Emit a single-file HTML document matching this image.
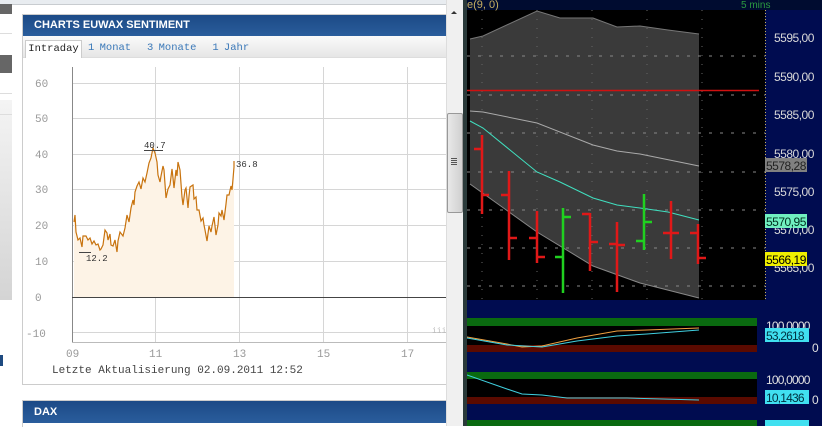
<!DOCTYPE html>
<html><head><meta charset="utf-8"><style>
body{margin:0;width:822px;height:426px;overflow:hidden;background:#fff;font-family:"Liberation Sans",sans-serif;position:relative}
.a{position:absolute}
.mono{font-family:"Liberation Mono",monospace}
</style></head><body>
<div class="a" style="left:0;top:0;width:446px;height:4px;background:#e8ecf0;border-bottom:1px solid #c8ccd0"></div>
<div class="a" style="left:0;top:4px;width:12px;height:10px;background:#666"></div>
<div class="a" style="left:0;top:55px;width:12px;height:18px;background:#666"></div>
<div class="a" style="left:0;top:100px;width:12px;height:200px;background:linear-gradient(#f4f4f4,#d4d4d4)"></div>
<div class="a" style="left:0;top:33px;width:12px;height:1px;background:#ddd"></div>
<div class="a" style="left:0;top:93px;width:12px;height:1px;background:#ddd"></div>
<div class="a" style="left:0;top:114px;width:12px;height:1px;background:#ddd"></div>
<div class="a" style="left:0;top:355px;width:3px;height:11px;background:#1e4a80"></div>

<div class="a" style="left:22px;top:14px;width:424px;height:369px;border:1px solid #ccc;border-right:none;background:#fff"></div>
<div class="a" style="left:23px;top:15px;width:423px;height:21px;background:linear-gradient(#1c4a86,#2a5d9c);color:#fff;font-weight:bold;font-size:11px;line-height:21px;padding-left:11px;box-sizing:border-box">CHARTS EUWAX SENTIMENT</div>
<div class="a" style="left:23px;top:36px;width:423px;height:21px;background:linear-gradient(#fafafa,#e6e6e6);border-bottom:1px solid #ddd"></div>
<div class="a mono" style="left:25px;top:40px;width:55px;height:17px;background:#fff;border:1px solid #ccc;border-bottom:none;font-size:10.5px;line-height:17px;text-align:center;color:#222">Intraday</div>
<div class="a mono" style="left:88px;top:42px;font-size:10.5px;color:#3a78b8;word-spacing:-1px">1 Monat&nbsp;&nbsp; 3 Monate&nbsp;&nbsp; 1 Jahr</div>

<svg class="a" style="left:0;top:0" width="446" height="426">
<g stroke="#d6d6d6" stroke-width="1">
<line x1="72" y1="83.5" x2="446" y2="83.5"/><line x1="72" y1="118.5" x2="446" y2="118.5"/><line x1="72" y1="154.5" x2="446" y2="154.5"/><line x1="72" y1="189.5" x2="446" y2="189.5"/><line x1="72" y1="225.5" x2="446" y2="225.5"/><line x1="72" y1="261.5" x2="446" y2="261.5"/><line x1="72" y1="332.5" x2="446" y2="332.5"/>
<line x1="155.5" y1="67" x2="155.5" y2="342"/><line x1="239.5" y1="67" x2="239.5" y2="342"/><line x1="323.5" y1="67" x2="323.5" y2="342"/><line x1="407.5" y1="67" x2="407.5" y2="342"/>
</g>
<line x1="72" y1="342.5" x2="446" y2="342.5" stroke="#bbb"/>
<line x1="72.5" y1="67" x2="72.5" y2="342" stroke="#888"/>
<path d="M74,297 L74,222 75,215 76,232 78,240 80,238 82,247 83,236 86,236 88,240 90,238 92,244 94,241 96,245 98,244 100,250 101,249 103,245 105,230 107,233 108,240 110,234 111,245 113,246 115,240 117,252 118,241 120,232 123,236 125,228 127,215 129,222 131,208 133,200 134,205 135,192 137,186 139,182 141,189 143,178 145,182 147,173 149,163 151,158 153,148 155,153 157,162 158,175 160,182 161,176 163,166 164,170 166,198 168,189 170,185 172,169 173,178 174,188 176,170 177,176 178,162 180,170 182,197 183,205 185,190 186,188 188,208 189,196 190,187 193,185 194,199 196,197 197,210 199,210 201,221 203,218 204,225 205,230 207,241 209,226 211,232 212,226 214,217 216,235 218,225 219,213 221,216 222,210 224,220 226,204 227,195 229,195 231,186 232,190 233,179 234,172 234,297 Z" fill="#fdf3e6" stroke="none"/>
<path d="M74,222 75,215 76,232 78,240 80,238 82,247 83,236 86,236 88,240 90,238 92,244 94,241 96,245 98,244 100,250 101,249 103,245 105,230 107,233 108,240 110,234 111,245 113,246 115,240 117,252 118,241 120,232 123,236 125,228 127,215 129,222 131,208 133,200 134,205 135,192 137,186 139,182 141,189 143,178 145,182 147,173 149,163 151,158 153,148 155,153 157,162 158,175 160,182 161,176 163,166 164,170 166,198 168,189 170,185 172,169 173,178 174,188 176,170 177,176 178,162 180,170 182,197 183,205 185,190 186,188 188,208 189,196 190,187 193,185 194,199 196,197 197,210 199,210 201,221 203,218 204,225 205,230 207,241 209,226 211,232 212,226 214,217 216,235 218,225 219,213 221,216 222,210 224,220 226,204 227,195 229,195 231,186 232,190 233,179 234,167 234,161" fill="none" stroke="#c8730e" stroke-width="1.2"/>
<line x1="72" y1="297.5" x2="446" y2="297.5" stroke="#444"/>
<line x1="144" y1="150.5" x2="163" y2="150.5" stroke="#444"/>
<line x1="79" y1="252.5" x2="91" y2="252.5" stroke="#444"/>
<g font-family="Liberation Mono,monospace" font-size="9" fill="#333">
<text x="144" y="148">40.7</text><text x="236" y="167">36.8</text><text x="86" y="261">12.2</text></g>
<g font-family="Liberation Mono,monospace" font-size="11" fill="#999">
<text x="35" y="87">60</text><text x="35" y="122">50</text><text x="35" y="158">40</text><text x="35" y="193">30</text><text x="35" y="229">20</text><text x="35" y="265">10</text><text x="35" y="301">0</text><text x="26" y="337">-10</text>
<text x="66" y="357">09</text><text x="149" y="357">11</text><text x="233" y="357">13</text><text x="317" y="357">15</text><text x="401" y="357">17</text></g>
<text x="52" y="373" font-family="Liberation Mono,monospace" font-size="11" fill="#444">Letzte Aktualisierung 02.09.2011 12:52</text>
<text x="432" y="333" font-family="Liberation Mono,monospace" font-size="8" fill="#bbb">iii</text>
</svg>
<div class="a" style="left:22px;top:400px;width:424px;height:26px;border:1px solid #ccc;border-right:none;border-bottom:none"></div>
<div class="a" style="left:23px;top:401px;width:423px;height:22px;background:linear-gradient(#1c4a86,#2a5d9c);color:#fff;font-weight:bold;font-size:11px;line-height:22px;padding-left:11px;box-sizing:border-box">DAX</div>

<div class="a" style="left:446px;top:0;width:17px;height:426px;background:#f0f0f0;border-left:1px solid #ddd"></div>
<div class="a" style="left:451px;top:11px;width:0;height:0;border-left:3px solid transparent;border-right:3px solid transparent;border-bottom:3px solid #333"></div>
<div class="a" style="left:447px;top:113px;width:14px;height:98px;background:linear-gradient(90deg,#e8e8e8,#d0d0d0);border:1px solid #999;border-radius:2px"></div>
<div class="a" style="left:451px;top:158px;width:6px;height:8px;background:repeating-linear-gradient(#555 0 1px,transparent 1px 2px)"></div>
<div class="a" style="left:463px;top:0;width:4px;height:426px;background:#2a3a3a"></div>

<svg class="a" style="left:467px;top:0" width="355" height="426">
<rect width="355" height="426" fill="#000"/>
<rect width="355" height="10" fill="#000c30"/>
<text x="0" y="8" font-size="11" fill="#c8b060" font-family="Liberation Sans">e(9, 0)</text>
<text x="274" y="8" font-size="10" fill="#2a9a40" font-family="Liberation Sans">5 mins</text>
<rect x="298" y="10" width="57" height="290" fill="#000c50"/>
<line x1="298.5" y1="10" x2="298.5" y2="300" stroke="#c8b060" stroke-dasharray="1,2"/>
<path d="M3,39 16,36 70,11 93,18 126,18 150,27 173,26 201,30 232,34 232,298 173,283 126,266 70,232 3,184Z" fill="#3a3a3a"/>
<path d="M3,39 16,36 70,11 93,18 126,18 150,27 173,26 201,30 232,34" fill="none" stroke="#777"/>
<path d="M3,184 70,232 126,266 173,283 232,298" fill="none" stroke="#888"/>
<g stroke="#888" stroke-dasharray="3,8" stroke-width="1">
<line x1="0" y1="56" x2="298" y2="56"/><line x1="0" y1="95" x2="298" y2="95"/><line x1="0" y1="133" x2="298" y2="133"/><line x1="0" y1="172" x2="298" y2="172"/><line x1="0" y1="210" x2="298" y2="210"/><line x1="0" y1="248" x2="298" y2="248"/><line x1="0" y1="286" x2="298" y2="286"/>
</g>
<g stroke="#666" stroke-dasharray="1,8"><line x1="15" y1="10" x2="15" y2="300"/><line x1="70" y1="10" x2="70" y2="300"/><line x1="125" y1="10" x2="125" y2="300"/><line x1="180" y1="10" x2="180" y2="300"/><line x1="235" y1="10" x2="235" y2="300"/></g>
<line x1="0" y1="90.5" x2="292" y2="90.5" stroke="#d01010" stroke-width="1.5"/>
<path d="M3,111 16,112 70,123 126,145 150,151 173,154 232,166" fill="none" stroke="#aaa"/>
<path d="M3,121 16,128 70,172 93,182 126,198 150,205 173,208 201,212 232,220" fill="none" stroke="#40e0c0"/>
<g stroke-width="2.5" fill="none">
<path stroke="#e01818" d="M15,135V214M7,149H15M15,195H22 M42,171V260M34,195H42M42,238H50 M70,211V263M62,238H70M70,257H78 M123,213V271M115,214H123M123,242H131 M150,222V292M142,244H150M150,245H158 M204,201V259M196,233H204M204,233H212 M231,224V264M223,233H231M231,258H239"/>
<path stroke="#20d020" d="M96,208V293M88,257H96M96,217H104 M177,194V250M169,241H177M177,222H185"/>
</g>
<g font-family="Liberation Sans" font-size="12" fill="#d8d8d8" letter-spacing="-0.5">
<text x="307" y="42">5595,00</text><text x="307" y="81">5590,00</text><text x="307" y="119">5585,00</text><text x="307" y="158">5580,00</text><text x="307" y="196">5575,00</text><text x="307" y="234">5570,00</text><text x="307" y="272">5565,00</text></g>
<rect x="298" y="158" width="42" height="14" fill="#808080"/><text x="299" y="170" font-size="12" fill="#222" letter-spacing="-0.5" font-family="Liberation Sans">5578,28</text>
<rect x="298" y="214" width="42" height="14" fill="#70f0c0"/><text x="299" y="226" font-size="12" fill="#003020" letter-spacing="-0.5" font-family="Liberation Sans">5570,95</text>
<rect x="298" y="252" width="42" height="14" fill="#f0f000"/><text x="299" y="264" font-size="12" fill="#000" letter-spacing="-0.5" font-family="Liberation Sans">5566,19</text>
<rect x="0" y="300" width="355" height="126" fill="#000c50"/>
<rect x="0" y="318" width="290" height="8" fill="#0a6a10"/><rect x="0" y="326" width="290" height="19" fill="#000"/><rect x="0" y="345" width="290" height="7" fill="#5a0a00"/>
<path d="M0,337 40,344 55,347 75,346 110,338 150,331 180,330 232,328" fill="none" stroke="#f0a040"/>
<path d="M0,338 40,345 75,347 110,341 150,336 180,334 232,330" fill="none" stroke="#40d0e0"/>
<rect x="0" y="372" width="290" height="7" fill="#0a6a10"/><rect x="0" y="379" width="290" height="18" fill="#000"/><rect x="0" y="397" width="290" height="7" fill="#5a0a00"/>
<path d="M0,375 40,389 55,394 75,395 100,398 160,398 232,400" fill="none" stroke="#40d0e0"/>
<rect x="0" y="420" width="290" height="6" fill="#0a6a10"/>
<g font-family="Liberation Sans" font-size="12" fill="#e0e0e0" letter-spacing="-0.8"><text x="299" y="330">100,0000</text><text x="345" y="352">0</text><text x="299" y="384">100,0000</text><text x="345" y="404">0</text></g>
<rect x="298" y="328" width="44" height="14" fill="#40e0f0"/><text x="299" y="340" font-size="12" fill="#003040" letter-spacing="-0.8" font-family="Liberation Sans">53,2618</text>
<rect x="298" y="390" width="44" height="14" fill="#40e0f0"/><text x="299" y="402" font-size="12" fill="#003040" letter-spacing="-0.8" font-family="Liberation Sans">10,1436</text>
<rect x="298" y="420" width="44" height="6" fill="#40e0f0"/>
</svg>
</body></html>
